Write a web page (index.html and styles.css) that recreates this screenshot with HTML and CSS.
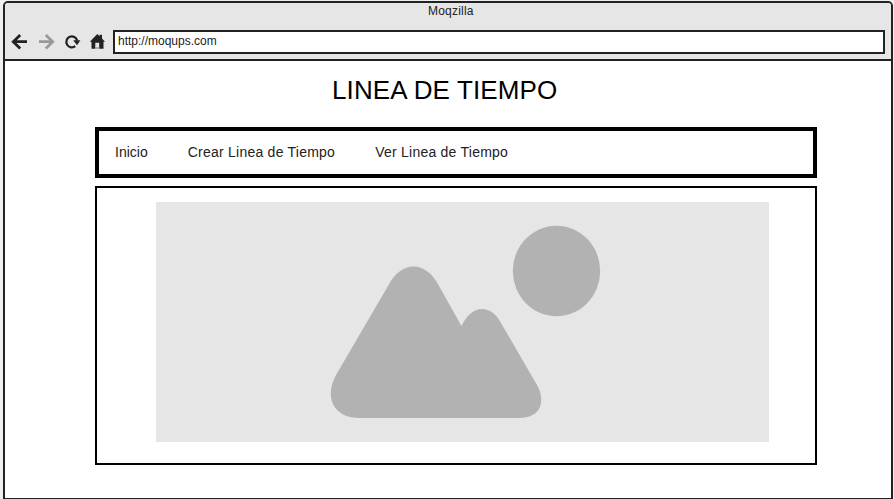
FILE: index.html
```html
<!DOCTYPE html>
<html lang="es">
<head>
<meta charset="utf-8">
<title>Linea de Tiempo</title>
<link rel="stylesheet" href="styles.css">
</head>
<body>
<div class="window">
  <header class="chrome">
    <div class="title"><span class="title-text">Moqzilla</span></div>
    <div class="toolbar">
      <svg class="icons" width="108" height="24" viewBox="5 30 108 24">
        <g fill="none" stroke="#222" stroke-width="2.8">
          <path d="M27 41.7H13M20.2 35L13.3 41.7L20.2 48.4"/>
          <path stroke="#999" d="M39 41.7H53M45.8 35L52.7 41.7L45.8 48.4"/>
          <path stroke-width="2.2" d="M75.3 46.2A5.5 5.5 0 1 1 77.2 40.5"/>
        </g>
        <path fill="#222" d="M73.2 40.2H80.4L77 45.2Z"/>
        <path fill="#222" d="M97.3 34L99.6 36.2V34.8H102V38.5L105 41.7H103.500V48.8H99.2V42.8H95.3V48.8H91.500V41.7H89.8Z"/>
        <path fill="#999" d="M95.3 47.2H99.2V48.8H95.3Z"/>
      </svg>
      <div class="url"><span class="url-text">http://moqups.com</span></div>
    </div>
  </header>
  <main class="page">
    <h1 class="heading"><span class="heading-text">LINEA DE TIEMPO</span></h1>
    <nav class="menu">
      <a class="item">Inicio</a>
      <a class="item wide">Crear Linea de Tiempo</a>
      <a class="item wide">Ver Linea de Tiempo</a>
    </nav>
    <section class="panel">
      <svg class="picture" width="613" height="240" viewBox="156 202 613 240">
        <g fill="#b2b2b2">
          <ellipse cx="556.5" cy="271" rx="43.7" ry="45.2"/>
          <path d="M388 286C401 260 426 260 439 286L461.500 326C472 304 491 304 501 323L537 385C546 401 541 418 520 418H360C333 418 324 397 336 375Z"/>
        </g>
      </svg>
    </section>
  </main>
</div>
</body>
</html>
```
FILE: styles.css
```css
* { box-sizing: border-box; }
body {
  margin: 0;
  height: 499px;
  overflow: hidden;
  padding: 1px 1px 0 3px;
  background: #efefef;
  font-family: "Liberation Sans", Arial, sans-serif;
  color: #222;
}
.window {
  height: 499px;
  border: 2px solid #222;
  border-radius: 5px 5px 0 0;
  background: #fff;
  overflow: hidden;
}
.chrome {
  height: 58px;
  background: #e6e6e6;
  border-bottom: 2px solid #222;
}
.title {
  height: 27px;
  padding-left: 423px;
  font-size: 12px;
  line-height: 16px;
  letter-spacing: 0.2px;
}
.toolbar { display: flex; }
.icons { flex: none; }
.url {
  width: 772px;
  height: 24px;
  border: 2px solid #222;
  background: #fff;
  padding-left: 3px;
  font-size: 12px;
  line-height: 19px;
}
.page { padding: 0 0 0 90px; }
.heading {
  margin: 0;
  height: 66px;
  padding: 12px 0 0 237px;
  font-size: 26px;
  line-height: 34px;
  letter-spacing: 0.12px;
  font-weight: 400;
  color: #000;
}
.menu {
  display: flex;
  gap: 40px;
  width: 722px;
  height: 51px;
  border: 4px solid #000;
  padding-left: 16px;
  font-size: 14px;
  line-height: 42px;
}
.wide { letter-spacing: 0.24px; }
.panel {
  width: 722px;
  height: 279px;
  margin-top: 8px;
  border: 2px solid #000;
  padding: 14px 0 0 59px;
}
.picture { display: block; background: #e6e6e6; }
```
